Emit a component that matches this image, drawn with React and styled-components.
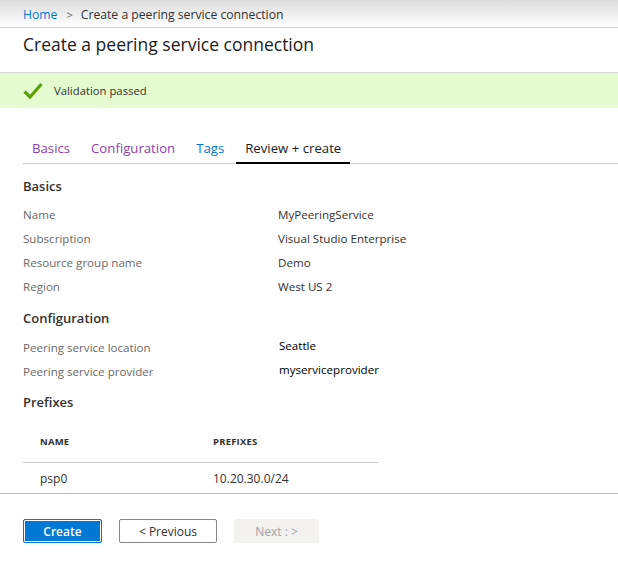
import React from "react";
import styled, { createGlobalStyle } from "styled-components";

const GlobalStyle = createGlobalStyle`
  body {
    margin: 0;
    background: #ffffff;
    font-family: "Open Sans", "Noto Sans", sans-serif;
    color: #323130;
  }
`;

const Page = styled.div`
  width: 618px;
  height: 566px;
  overflow: hidden;
`;

const Breadcrumb = styled.div`
  height: 28px;
  display: flex;
  align-items: center;
  padding: 2px 0 0 23px;
  box-sizing: border-box;
  font-size: 12.2px;
  background: linear-gradient(#dcdcdc, #ffffff);
  border-bottom: 1px solid #d4d4d4;
  color: #323130;
`;

const Crumb = styled.span`
  color: ${(p) => (p.link ? "#0078d4" : "#323130")};
`;

const Chevron = styled.span`
  margin: 0 8px 0 9px;
  color: #605e5c;
  font-size: 11px;
`;

const TitleBar = styled.div`
  height: 45px;
  padding: 4px 23px 0;
  box-sizing: border-box;
  border-bottom: 1px solid #d6d6d6;
`;

const Title = styled.h1`
  margin: 0;
  font-size: 17.5px;
  font-weight: 400;
  color: #1b1b1b;
`;

const Banner = styled.div`
  height: 35px;
  display: flex;
  align-items: center;
  gap: 11px;
  padding-left: 23px;
  background: #e5fcd0;
  font-size: 11.3px;
  color: #323130;
`;

const Main = styled.div`
  padding: 0 0 0 23px;
`;

const Tabs = styled.div`
  display: flex;
  gap: 3px;
  margin-top: 29px;
  border-bottom: 1px solid #d0d0d0;
`;

const Tab = styled.div`
  padding: 0 9px;
  height: 25px;
  line-height: 22px;
  font-size: 13.2px;
  color: ${(p) => p.color};
  border-bottom: 2px solid ${(p) => (p.active ? "#000000" : "transparent")};
  margin-bottom: -1px;
`;

const SectionTitle = styled.div`
  font-size: 13px;
  font-weight: 600;
  color: #323130;
  height: 24px;
  line-height: 24px;
  margin-top: ${(p) => p.top || 0}px;
  margin-bottom: ${(p) => p.bottom || 0}px;
`;

const Row = styled.div`
  display: grid;
  grid-template-columns: 255px 1fr;
  height: 24px;
  align-items: center;
  font-size: 11.6px;
`;

const Label = styled.span`
  color: #6b6967;
`;

const Value = styled.span`
  color: ${(p) => (p.dark ? "#000000" : "#323130")};
  position: relative;
  left: ${(p) => (p.nudge ? 1 : 0)}px;
  top: ${(p) => (p.nudge ? -2 : 0)}px;
`;

const Table = styled.div`
  width: 355px;
  margin-top: 6px;
`;

const TableHead = styled.div`
  display: grid;
  grid-template-columns: 173px 1fr;
  padding-left: 17px;
  height: 42px;
  align-items: center;
  font-size: 9.5px;
  font-weight: 700;
  letter-spacing: 0.2px;
  color: #323130;
  border-bottom: 1px solid #c8c8c8;
`;

const TableRow = styled.div`
  display: grid;
  grid-template-columns: 173px 1fr;
  padding-left: 17px;
  height: 30px;
  align-items: center;
  font-size: 12px;
  color: #323130;
`;

const Footer = styled.div`
  border-top: 1px solid #c0c0c0;
  display: flex;
  gap: 17px;
  padding: 25px 23px 0;
`;

const Button = styled.button`
  height: 24px;
  width: ${(p) => p.w}px;
  box-sizing: border-box;
  font-family: inherit;
  font-size: 12px;
  font-weight: ${(p) => (p.primary ? 600 : 400)};
  border-radius: 2px;
  padding: 0;
  cursor: pointer;
  ${(p) =>
    p.primary
      ? `background: #0078d4; color: #fff; border: 1px solid #0078d4; box-shadow: inset 0 0 0 1px #fff;`
      : p.disabled
      ? `background: #f3f2f1; color: #a19f9d; border: 1px solid #f3f2f1;`
      : `background: #fff; color: #323130; border: 1px solid #8a8886;`}
`;

const CheckIcon = () => (
  <svg width="20" height="18" viewBox="0 0 20 18">
    <path d="M1.5 9.5 L7 15 L18.5 2" fill="none" stroke="#57a300" strokeWidth="3.2" />
  </svg>
);

const basics = [
  ["Name", "MyPeeringService"],
  ["Subscription", "Visual Studio Enterprise"],
  ["Resource group name", "Demo"],
  ["Region", "West US 2"],
];

const config = [
  ["Peering service location", "Seattle"],
  ["Peering service provider", "myserviceprovider"],
];

const tabs = [
  { text: "Basics", color: "#8e3faa" },
  { text: "Configuration", color: "#8e3faa" },
  { text: "Tags", color: "#0078d4" },
  { text: "Review + create", color: "#1b1b1b", active: true },
];

const App = () => (
  <Page>
    <GlobalStyle />
    <Breadcrumb>
      <Crumb link>Home</Crumb>
      <Chevron>&gt;</Chevron>
      <Crumb>Create a peering service connection</Crumb>
    </Breadcrumb>
    <TitleBar>
      <Title>Create a peering service connection</Title>
    </TitleBar>
    <Banner>
      <CheckIcon />
      Validation passed
    </Banner>
    <Main>
      <Tabs>
        {tabs.map((t) => (
          <Tab key={t.text} color={t.color} active={t.active}>
            {t.text}
          </Tab>
        ))}
      </Tabs>
      <SectionTitle top={10} bottom={4}>Basics</SectionTitle>
      {basics.map(([k, v]) => (
        <Row key={k}>
          <Label>{k}</Label>
          <Value>{v}</Value>
        </Row>
      ))}
      <SectionTitle top={8} bottom={5}>Configuration</SectionTitle>
      {config.map(([k, v]) => (
        <Row key={k}>
          <Label>{k}</Label>
          <Value dark nudge>
            {v}
          </Value>
        </Row>
      ))}
      <SectionTitle top={7}>Prefixes</SectionTitle>
      <Table>
        <TableHead>
          <span>NAME</span>
          <span>PREFIXES</span>
        </TableHead>
        <TableRow>
          <span>psp0</span>
          <span>10.20.30.0/24</span>
        </TableRow>
      </Table>
    </Main>
    <Footer>
      <Button primary w={79}>Create</Button>
      <Button w={98}>&lt; Previous</Button>
      <Button disabled w={85}>Next : &gt;</Button>
    </Footer>
  </Page>
);

export default App;
